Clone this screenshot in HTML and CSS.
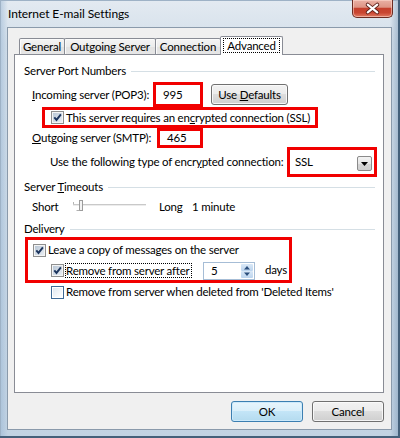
FILE: index.html
```html
<!DOCTYPE html>
<html>
<head>
<meta charset="utf-8">
<title>Internet E-mail Settings</title>
<link rel="stylesheet" href="styles.css">
</head>
<body>
<div class="window">
  <div class="titlebar">
    <span class="title">Internet E-mail Settings</span>
    <div class="close">
      <svg width="41" height="17" viewBox="0 0 41 17">
        <path d="M15.5 4.5 L25.5 12.5 M25.5 4.5 L15.5 12.5" stroke="#5a1e17" stroke-width="4.2" stroke-linecap="round" fill="none"/>
        <path d="M15.5 4.5 L25.5 12.5 M25.5 4.5 L15.5 12.5" stroke="#ffffff" stroke-width="2.3" stroke-linecap="round" fill="none"/>
      </svg>
    </div>
  </div>
  <div class="client">
    <div class="tabs">
      <div class="tab t-general">General</div>
      <div class="tab t-outgoing">Outgoing Server</div>
      <div class="tab t-connection">Connection</div>
      <div class="tab t-advanced selected"><span class="focus-tab">Advanced</span></div>
    </div>
    <div class="panel">
      <div class="grp g-ports"><span class="grp-title">Server Port Numbers</span><span class="rule"></span></div>
      <div class="row r-in">
        <span class="lbl lbl-in"><u>I</u>ncoming server (POP3):</span>
        <span class="mark field f-in">995</span>
        <button class="btn btn-def" type="button">Use <u>D</u>efaults</button>
      </div>
      <div class="row r-ssl">
        <span class="mark chkline">
          <svg class="chk" width="13" height="13" viewBox="0 0 13 13">
            <defs><linearGradient id="ga" x1="0" y1="0" x2="1" y2="1"><stop offset="0" stop-color="#b9c7d6"/><stop offset="1" stop-color="#e9eef4"/></linearGradient></defs>
            <rect x=".5" y=".5" width="12" height="12" fill="#f4f4f4" stroke="#8e8f8f"/>
            <rect x="2" y="2" width="9" height="9" fill="url(#ga)"/>
            <path d="M3.3 6.3 L5.5 8.9 L9.9 3.4" fill="none" stroke="#1c355e" stroke-width="1.9"/>
          </svg>
          <span class="ctext">This server requires an en<u>c</u>rypted connection (SSL)</span>
        </span>
      </div>
      <div class="row r-out">
        <span class="lbl lbl-out"><u>O</u>utgoing server (SMTP):</span>
        <span class="mark field f-out">465</span>
      </div>
      <div class="row r-enc">
        <span class="lbl lbl-enc">Use the following type of encr<u>y</u>pted connection:</span>
        <span class="mark combo-wrap">
          <span class="combo">
            <span class="combo-val">SSL</span>
            <span class="combo-btn">
              <svg width="13" height="13" viewBox="0 0 13 13"><path d="M3 5 L10 5 L6.5 9 Z" fill="#000"/></svg>
            </span>
          </span>
        </span>
      </div>
      <div class="grp g-time"><span class="grp-title">Server <u>T</u>imeouts</span><span class="rule"></span></div>
      <div class="row r-slider">
        <span class="lbl lbl-short">Short</span>
        <svg class="slider" width="73" height="16" viewBox="0 0 73 16">
          <path d="M0 5.5 H73" stroke="#c9c9c9" stroke-width="1"/>
          <path d="M0 6.5 H73" stroke="#ececec" stroke-width="1"/>
          <path d="M0.5 3 V5" stroke="#b5b5b5" stroke-width="1"/>
          <rect x="6.5" y="1.5" width="3" height="10" fill="#f3f3f3" stroke="#9c9c9c"/>
          <path d="M6.5 11.5 H3.5" stroke="#b0b0b0" stroke-width="1"/>
        </svg>
        <span class="lbl lbl-long">Long</span>
        <span class="lbl">1 minute</span>
      </div>
      <div class="grp g-del"><span class="grp-title">Delivery</span><span class="rule"></span></div>
      <div class="mark delivery">
        <div class="row r-leave">
          <svg class="chk" width="13" height="13" viewBox="0 0 13 13">
            <defs><linearGradient id="gb" x1="0" y1="0" x2="1" y2="1"><stop offset="0" stop-color="#b9c7d6"/><stop offset="1" stop-color="#e9eef4"/></linearGradient></defs>
            <rect x=".5" y=".5" width="12" height="12" fill="#f4f4f4" stroke="#8e8f8f"/>
            <rect x="2" y="2" width="9" height="9" fill="url(#gb)"/>
            <path d="M3.3 6.3 L5.5 8.9 L9.9 3.4" fill="none" stroke="#1c355e" stroke-width="1.9"/>
          </svg>
          <span class="ctext">Leave a copy of messages on the server</span>
        </div>
        <div class="row r-remove">
          <svg class="chk" width="13" height="13" viewBox="0 0 13 13">
            <defs><linearGradient id="gc" x1="0" y1="0" x2="1" y2="1"><stop offset="0" stop-color="#b9c7d6"/><stop offset="1" stop-color="#e9eef4"/></linearGradient></defs>
            <rect x=".5" y=".5" width="12" height="12" fill="#f4f4f4" stroke="#8e8f8f"/>
            <rect x="2" y="2" width="9" height="9" fill="url(#gc)"/>
            <path d="M3.3 6.3 L5.5 8.9 L9.9 3.4" fill="none" stroke="#1c355e" stroke-width="1.9"/>
          </svg>
          <span class="focus-text">Remove from server after</span>
          <span class="spin">
            <span class="spin-val">5</span>
            <span class="spin-btns">
              <span class="spin-btn"><svg width="10" height="7" viewBox="0 0 10 7"><path d="M2 5.5 L5 2 L8 5.5 Z" fill="#2c4f7c"/></svg></span>
              <span class="spin-btn"><svg width="10" height="7" viewBox="0 0 10 7"><path d="M2 1.5 L5 5 L8 1.5 Z" fill="#2c4f7c"/></svg></span>
            </span>
          </span>
          <span class="days">days</span>
        </div>
      </div>
      <div class="row r-deleted">
        <svg class="chk" width="13" height="13" viewBox="0 0 13 13">
          <defs><linearGradient id="gd" x1="0" y1="0" x2="1" y2="1"><stop offset="0" stop-color="#dfe7f0"/><stop offset="1" stop-color="#ffffff"/></linearGradient></defs>
          <rect x=".5" y=".5" width="12" height="12" fill="#ffffff" stroke="#3e6996"/>
          <rect x="2" y="2" width="9" height="9" fill="url(#gd)"/>
        </svg>
        <span class="ctext">Remove from server when deleted from 'Deleted Items'</span>
      </div>
    </div>
    <div class="buttons">
      <button class="btn btn-ok" type="button">OK</button>
      <button class="btn btn-cancel" type="button">Cancel</button>
    </div>
  </div>
</div>
</body>
</html>
```
FILE: styles.css
```css
* { box-sizing: border-box; }
html, body { margin: 0; padding: 0; }
body {
  width: 400px;
  height: 438px;
  overflow: hidden;
  font-family: Lato, "Noto Sans", sans-serif;
  font-size: 11.5px;
  letter-spacing: -0.2px;
  line-height: 16px;
  color: #000;
  background: #c8d6e4;
}
u { text-decoration: underline; text-underline-offset: 1px; }

.window {
  width: 400px;
  height: 438px;
  padding: 0 8px 8px 7px;
  display: flex;
  flex-direction: column;
  background:
    linear-gradient(to right, rgba(150,180,210,0.55) 0px, rgba(255,255,255,0) 8px, rgba(255,255,255,0) 390px, rgba(120,150,180,0.6) 400px),
    linear-gradient(to bottom, #e3eaf1 0%, #d3dfea 10%, #c9d8e6 60%, #c2d3e3 100%);
  box-shadow: inset -2px -2px 0 #44607a, inset 1px 1px 0 #9eb2c6;
}

.titlebar {
  height: 27px;
  flex: none;
  display: flex;
  justify-content: space-between;
  align-items: flex-start;
}
.title {
  padding-top: 6px;
  margin-left: 1px;
  font-size: 12px;
  letter-spacing: -0.1px;
  color: #000;
}
.close {
  width: 41px;
  height: 18px;
  margin-right: -1px;
  border: 1px solid #6b2c22;
  border-top: none;
  border-radius: 0 0 5px 5px;
  background: linear-gradient(to bottom, #eab1a5 0%, #de9585 42%, #c5412d 50%, #c94631 75%, #e07b63 100%);
  box-shadow: inset 0 0 0 1px rgba(255,220,210,0.55);
  display: flex;
  align-items: center;
  justify-content: center;
}
.close svg { display: block; }

.client {
  width: 385px;
  height: 403px;
  flex: none;
  background: #f0f0f0;
  border: 1px solid #8a9aab;
  padding: 8px 6px 0 6px;
  display: flex;
  flex-direction: column;
}

.tabs {
  display: flex;
  align-items: flex-end;
  height: 18px;
  margin-left: 5px;
  position: relative;
  z-index: 2;
}
.tab {
  height: 16px;
  border: 1px solid #898c95;
  border-bottom: none;
  border-radius: 2px 2px 0 0;
  background: linear-gradient(to bottom, #f4f4f4 0%, #ececec 50%, #e2e2e2 51%, #e6e6e6 100%);
  box-shadow: inset 1px 1px 0 #fbfbfb;
  display: flex;
  align-items: center;
  justify-content: center;
  line-height: 14px;
  flex: none;
}
.tab + .tab { margin-left: -1px; }
.t-general { width: 46px; }
.t-outgoing { width: 92px; }
.t-connection { width: 66px; }
.t-advanced { width: 63px; }
.tab.selected {
  height: 19px;
  margin-bottom: -1px;
  background: #ffffff;
  box-shadow: none;
  position: relative;
  z-index: 3;
}
.focus-tab {
  width: 57px;
  height: 15px;
  border: 1px dotted #000;
  display: flex;
  align-items: center;
  justify-content: center;
  margin-top: -1px;
}

.panel {
  width: 370px;
  height: 339px;
  flex: none;
  background: #ffffff;
  border: 1px solid #898c95;
  padding: 8px 8px 0 9px;
  position: relative;
  z-index: 1;
}

.grp {
  height: 16px;
  display: flex;
  align-items: center;
}
.grp-title { white-space: nowrap; }
.rule {
  flex: 1;
  height: 1px;
  margin-left: 5px;
  background: #d5dfe5;
}
.g-time { margin-top: 2px; }
.g-del { margin-top: 6px; }

.row {
  display: flex;
  align-items: center;
  white-space: nowrap;
}
.lbl { flex: none; }
.mark { border: 3px solid #f10000; }

.r-in { height: 25px; margin-top: 3px; }
.lbl-in { margin-left: 8px; width: 121px; }
.field {
  height: 100%;
  background: #fff;
  display: flex;
  align-items: center;
  padding-left: 7px;
  flex: none;
}
.f-in { width: 50px; }
.btn {
  font: inherit;
  letter-spacing: inherit;
  color: #000;
  height: 21px;
  padding: 0;
  border: 1px solid #707070;
  border-radius: 3px;
  background: linear-gradient(to bottom, #f2f2f2 0%, #ebebeb 49%, #dddddd 50%, #cfcfcf 100%);
  box-shadow: inset 0 0 0 1px rgba(252,252,252,0.85);
  line-height: 17px;
  flex: none;
}
.btn-def { margin-left: 8px; width: 77px; }

.r-ssl { height: 21px; }
.chkline {
  margin-left: 18px;
  width: 276px;
  height: 21px;
  display: flex;
  align-items: center;
  padding-left: 6px;
}
.chk { display: block; flex: none; }
.ctext { margin-left: 2px; }

.r-out { height: 20px; }
.lbl-out { margin-left: 8px; width: 125px; }
.f-out { width: 46px; padding-left: 7px; }

.r-enc { height: 30px; margin-top: -1px; }
.lbl-enc { margin-left: 26px; width: 237px; }
.combo-wrap {
  width: 90px;
  height: 30px;
  flex: none;
  background: #fff;
}
.combo {
  height: 100%;
  display: flex;
  align-items: center;
  justify-content: space-between;
  padding: 0 2px 0 5px;
}
.combo-btn {
  width: 15px;
  height: 15px;
  border: 1px solid #8a8a8a;
  border-radius: 2px;
  background: linear-gradient(to bottom, #f3f3f3 0%, #e6e6e6 50%, #d5d5d5 51%, #cfcfcf 100%);
  display: flex;
  align-items: center;
  justify-content: center;
  margin-top: 2px;
}
.combo-btn svg { display: block; }

.r-slider { height: 16px; margin-top: 4px; }
.lbl-short { margin-left: 8px; width: 41px; }
.slider { display: block; flex: none; }
.lbl-long { margin-left: 13px; width: 33px; }

.delivery {
  margin-left: 1px;
  width: 267px;
  height: 46px;
}
.r-leave { height: 20px; padding-left: 5px; }
.r-remove { height: 20px; padding-left: 23px; }
.focus-text {
  margin-left: 1px;
  width: 127px;
  height: 15px;
  border: 1px dotted #000;
  line-height: 13px;
  padding-left: 0;
}
.spin {
  margin-left: 11px;
  width: 52px;
  height: 18px;
  border: 1px solid #a6bdd6;
  background: #fff;
  display: flex;
  align-items: center;
  justify-content: space-between;
  padding-left: 7px;
  padding-right: 1px;
  margin-top: 1px;
}
.spin-btns {
  width: 12px;
  height: 14px;
  display: flex;
  flex-direction: column;
}
.spin-btn {
  flex: 1;
  background: linear-gradient(to bottom, #d9e8f7, #bcd4ee);
  display: flex;
  align-items: center;
  justify-content: center;
  border-radius: 1px;
}
.spin-btn svg { display: block; }
.days { margin-left: 10px; }

.r-deleted { height: 16px; margin-top: 1px; padding-left: 27px; }

.buttons {
  display: flex;
  justify-content: flex-end;
  gap: 9px;
  margin-top: 8px;
  width: 370px;
}
.btn-ok, .btn-cancel { width: 72px; }
.btn-ok {
  border-color: #3c7fb1;
  background: linear-gradient(to bottom, #e8f5fc 0%, #d9effa 49%, #c3e5f7 50%, #b4dbef 100%);
  box-shadow: inset 0 0 0 1px #cdeafb;
}
```
